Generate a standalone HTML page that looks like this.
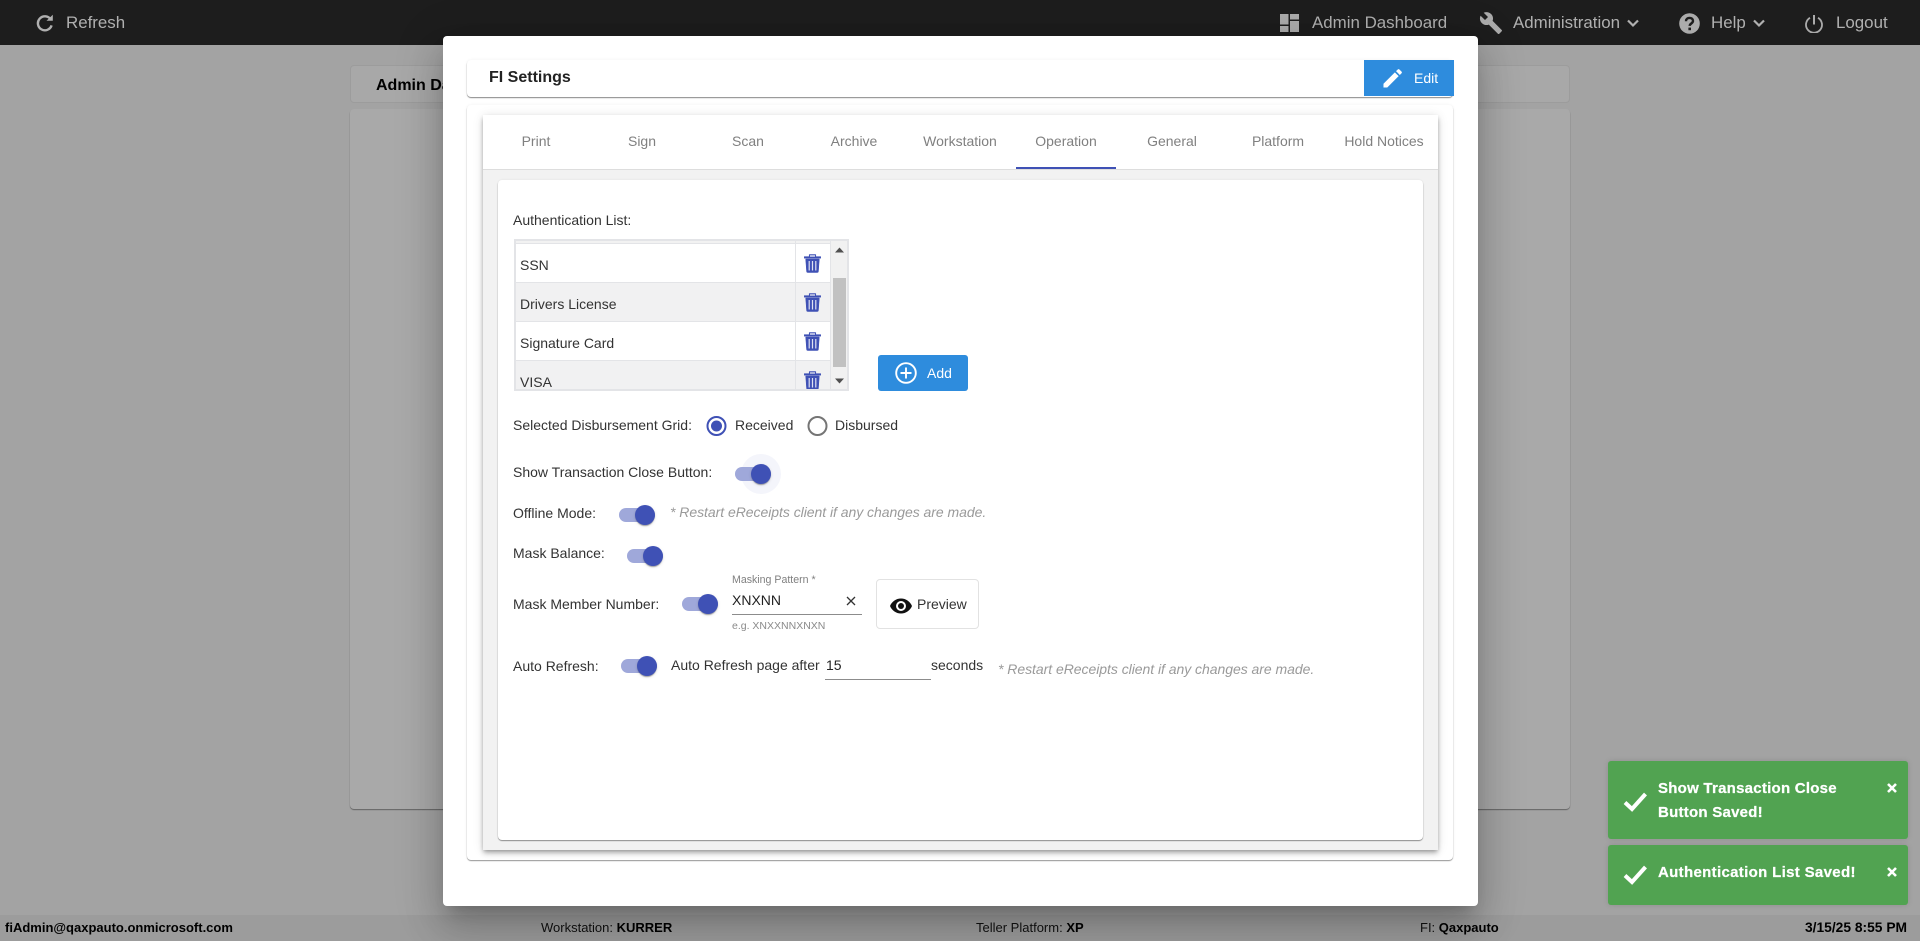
<!DOCTYPE html>
<html><head><meta charset="utf-8"><title>FI Settings</title>
<style>
html,body{margin:0;padding:0;width:1920px;height:941px;overflow:hidden;background:#a3a3a3;font-family:"Liberation Sans",Arial,sans-serif;}
div,span,svg{position:absolute;box-sizing:border-box}
.t{white-space:nowrap;line-height:20px;height:20px;font-size:14px;color:#333}
.nav{color:#b0b0b0;font-size:16.9px;top:13px}
.tab{color:#808080;top:131px;width:106px;text-align:center}
.sw{width:36px;height:14px;border-radius:7px;background:#9fa8da}
.sw i{position:absolute;display:block;width:20px;height:20px;border-radius:50%;background:#3f51b5;top:-3px;left:16px;box-shadow:0 2px 1px -1px rgba(0,0,0,.2),0 1px 1px rgba(0,0,0,.14),0 1px 3px rgba(0,0,0,.12)}
.note{color:#9a9a9a;font-style:italic;letter-spacing:-.04px}
.toast{left:1608px;width:300px;background:#51a351;border-radius:3px;box-shadow:0 0 6px rgba(0,0,0,.12)}
.tt{color:#fff;font-weight:bold;font-size:15px;letter-spacing:.25px;-webkit-text-stroke:.25px #fff}
.st{font-size:13px;color:#111;top:918px}
.st b{color:#000}
</style></head><body>
<!-- background -->
<div style="left:0;top:0;width:1920px;height:45px;background:#1d1d1d"></div>
<div style="left:350px;top:65px;width:1220px;height:38px;background:#a8a8a8;border:1px solid #9c9c9c;border-radius:4px"></div>
<div class="t" style="left:376px;top:76px;font-weight:bold;font-size:16px;color:#000">Admin Dashboard</div>
<div style="left:350px;top:109px;width:1220px;height:700px;background:#a9a9a9;border-radius:4px;box-shadow:0 1px 1px rgba(0,0,0,.4)"></div>
<div style="left:0;top:915px;width:1920px;height:26px;background:#9c9c9c"></div>

<!-- nav -->
<svg style="left:36px;top:14px" width="18" height="18" viewBox="0 0 18 18"><path d="M14.6 5.2A7 7 0 1 0 15.6 11.4" fill="none" stroke="#b0b0b0" stroke-width="2.4"/><path d="M10.5 6.8L16.8 6.8 16.8 .8z" fill="#b0b0b0"/></svg>
<div class="t nav" style="left:66px">Refresh</div>
<svg style="left:1280px;top:14px" width="19" height="18" viewBox="0 0 19 18" fill="#ababab"><rect x="0" y="0" width="8.5" height="10.5"/><rect x="10" y="0" width="9" height="5.5"/><rect x="10" y="7" width="9" height="11"/><rect x="0" y="12" width="8.5" height="6"/></svg>
<div class="t nav" style="left:1312px">Admin Dashboard</div>
<svg style="left:1479px;top:11px" width="24" height="24" viewBox="0 0 24 24"><path d="M22.7 19l-9.100-9.100c.9-2.300.4-5-1.500-6.900-2-2-5-2.400-7.400-1.300L9 6 6 9 1.600 4.700C.4 7.100.9 10.100 2.900 12.100c1.900 1.900 4.600 2.400 6.900 1.500l9.100 9.100c.4.4 1 .4 1.400 0l2.300-2.300c.5-.4.5-1.100.1-1.400z" fill="#ababab"/></svg>
<div class="t nav" style="left:1513px">Administration</div>
<svg style="left:1627px;top:19px" width="12" height="9" viewBox="0 0 12 9"><path d="M1 1.500l5 5 5-5" fill="none" stroke="#b0b0b0" stroke-width="2.200"/></svg>
<svg style="left:1679px;top:13px" width="21" height="21" viewBox="0 0 21 21"><circle cx="10.500" cy="10.500" r="10.300" fill="#ababab"/><path d="M7 8.200c0-2 1.500-3.300 3.500-3.300s3.500 1.200 3.500 3c0 2.600-3.300 2.600-3.300 5" fill="none" stroke="#1d1d1d" stroke-width="2.400"/><rect x="9.400" y="14.600" width="2.600" height="2.600" fill="#1d1d1d"/></svg>
<div class="t nav" style="left:1711px">Help</div>
<svg style="left:1753px;top:19px" width="12" height="9" viewBox="0 0 12 9"><path d="M1 1.500l5 5 5-5" fill="none" stroke="#b0b0b0" stroke-width="2.200"/></svg>
<svg style="left:1805px;top:14px" width="18" height="19" viewBox="0 0 18 19"><path d="M5 3.800A8 8 0 1 0 13 3.800" fill="none" stroke="#ababab" stroke-width="1.800"/><rect x="8" y="1" width="2" height="9.500" fill="#ababab"/></svg>
<div class="t nav" style="left:1836px">Logout</div>

<!-- status -->
<div class="t st" style="left:5px;font-weight:bold;color:#000">fiAdmin@qaxpauto.onmicrosoft.com</div>
<div class="t st" style="left:541px">Workstation: <b>KURRER</b></div>
<div class="t st" style="left:976px">Teller Platform: <b>XP</b></div>
<div class="t st" style="left:1420px">FI: <b>Qaxpauto</b></div>
<div class="t st" style="left:1805px;font-weight:bold;color:#000;font-size:13.800px">3/15/25 8:55 PM</div>

<!-- modal -->
<div style="left:443px;top:36px;width:1035px;height:870px;background:#fff;border-radius:4px;box-shadow:0 11px 15px -7px rgba(0,0,0,.2),0 24px 38px 3px rgba(0,0,0,.14),0 9px 46px 8px rgba(0,0,0,.12)"></div>
<div style="left:467px;top:60px;width:986px;height:37px;background:#fff;border-radius:4px;box-shadow:0 1px 1px rgba(0,0,0,.45),0 0 3px rgba(0,0,0,.06)"></div>
<div class="t" style="left:489px;top:68px;font-weight:bold;font-size:16px;color:#222">FI Settings</div>
<div style="left:1364px;top:60px;width:90px;height:36px;background:#2e8cdd"></div>
<svg style="left:1383px;top:69px" width="19" height="19" viewBox="0 0 20 20"><path d="M0.500 19.500V15.500L12.500 3.500 16.500 7.500 4.500 19.500zM13.700 2.300L15.400 .6a1.400 1.400 0 0 1 2 0l2 2a1.400 1.400 0 0 1 0 2L17.700 6.300z" fill="#fff"/></svg>
<div class="t" style="left:1414px;top:68px;color:#fff">Edit</div>

<div style="left:467px;top:105px;width:986px;height:755px;background:#fff;border-radius:4px;box-shadow:0 1px 1px rgba(0,0,0,.4),0 0 3px rgba(0,0,0,.06)"></div>
<div style="left:483px;top:115px;width:955px;height:735px;background:#f2f2f2;box-shadow:0 2px 4px -1px rgba(0,0,0,.3),0 4px 5px rgba(0,0,0,.14),0 1px 10px rgba(0,0,0,.12)"></div>
<div style="left:483px;top:115px;width:955px;height:55px;background:#fff;border-bottom:1px solid #ddd"></div>
<div class="t tab" style="left:483px">Print</div>
<div class="t tab" style="left:589px">Sign</div>
<div class="t tab" style="left:695px">Scan</div>
<div class="t tab" style="left:801px">Archive</div>
<div class="t tab" style="left:907px">Workstation</div>
<div class="t tab" style="left:1013px">Operation</div>
<div class="t tab" style="left:1119px">General</div>
<div class="t tab" style="left:1225px">Platform</div>
<div class="t tab" style="left:1331px">Hold Notices</div>
<div style="left:1016px;top:167px;width:100px;height:2px;background:#3f51b5"></div>
<div style="left:498px;top:180px;width:925px;height:660px;background:#fff;border-radius:4px;box-shadow:0 1px 1px rgba(0,0,0,.4),0 0 2px rgba(0,0,0,.08)"></div>

<!-- auth list -->
<div class="t" style="left:513px;top:210px">Authentication List:</div>
<div style="left:514px;top:239px;width:335px;height:152px;border:2px solid #e3e4e7;overflow:hidden;background:#fff">
<div style="left:0;top:0;width:314px;height:2px;background:#f2f2f2"></div>
<div style="left:0;top:2px;width:314px;height:1px;background:#e3e4e7"></div>
<div style="left:0;top:3px;width:314px;height:39px;background:#fff;border-bottom:1px solid #e3e4e7"></div>
<div style="left:0;top:42px;width:314px;height:39px;background:#f1f1f2;border-bottom:1px solid #e3e4e7"></div>
<div style="left:0;top:81px;width:314px;height:39px;background:#fff;border-bottom:1px solid #e3e4e7"></div>
<div style="left:0;top:120px;width:314px;height:39px;background:#f1f1f2"></div>
<div style="left:279px;top:0;width:1px;height:152px;background:#e3e4e7"></div>
<div style="left:314px;top:0;width:19px;height:150px;background:#f1f1f1;border-left:1px solid #e3e4e7"></div>
<div style="left:317px;top:37px;width:13px;height:89px;background:#c1c1c1"></div>
<svg style="left:318px;top:6px" width="11" height="6" viewBox="0 0 11 6"><path d="M5.500 .5L10 5.500H1z" fill="#505050"/></svg>
<svg style="left:318px;top:137px" width="11" height="6" viewBox="0 0 11 6"><path d="M5.500 5.500L10 .5H1z" fill="#505050"/></svg>
<div class="t" style="left:4px;top:14px">SSN</div>
<div class="t" style="left:4px;top:53px">Drivers License</div>
<div class="t" style="left:4px;top:92px">Signature Card</div>
<div class="t" style="left:4px;top:131px">VISA</div>
<svg style="left:288px;top:13px" width="17" height="19" viewBox="0 0 17 19"><path d="M1.700 5H15.300L14.400 17.500a1 1 0 0 1-1 1H3.600a1 1 0 0 1-1-1zM.2 2.600H16.800V4.200H.2zM5.200 2.600V.5H11.800V2.600" fill="#3f51b5" stroke="#3f51b5" stroke-width=".5"/><path d="M6 1.400h5v1.200H6z" fill="#fff"/><path d="M5.200 7v9.500M8.500 7v9.500M11.800 7v9.500" stroke="#dfe2f3" stroke-width="1.200"/></svg>
<svg style="left:288px;top:52px" width="17" height="19" viewBox="0 0 17 19"><path d="M1.700 5H15.300L14.400 17.500a1 1 0 0 1-1 1H3.600a1 1 0 0 1-1-1zM.2 2.600H16.800V4.200H.2zM5.200 2.600V.5H11.800V2.600" fill="#3f51b5" stroke="#3f51b5" stroke-width=".5"/><path d="M6 1.400h5v1.200H6z" fill="#f1f1f2"/><path d="M5.200 7v9.500M8.500 7v9.500M11.800 7v9.500" stroke="#dfe2f3" stroke-width="1.200"/></svg>
<svg style="left:288px;top:91px" width="17" height="19" viewBox="0 0 17 19"><path d="M1.700 5H15.300L14.400 17.500a1 1 0 0 1-1 1H3.600a1 1 0 0 1-1-1zM.2 2.600H16.800V4.200H.2zM5.200 2.600V.5H11.800V2.600" fill="#3f51b5" stroke="#3f51b5" stroke-width=".5"/><path d="M6 1.400h5v1.200H6z" fill="#fff"/><path d="M5.200 7v9.500M8.500 7v9.500M11.800 7v9.500" stroke="#dfe2f3" stroke-width="1.200"/></svg>
<svg style="left:288px;top:130px" width="17" height="19" viewBox="0 0 17 19"><path d="M1.700 5H15.300L14.400 17.500a1 1 0 0 1-1 1H3.600a1 1 0 0 1-1-1zM.2 2.600H16.800V4.200H.2zM5.200 2.600V.5H11.800V2.600" fill="#3f51b5" stroke="#3f51b5" stroke-width=".5"/><path d="M6 1.400h5v1.200H6z" fill="#f1f1f2"/><path d="M5.200 7v9.500M8.500 7v9.500M11.800 7v9.500" stroke="#dfe2f3" stroke-width="1.200"/></svg>
</div>
<div style="left:878px;top:355px;width:90px;height:36px;background:#2e8cdd;border-radius:3px"></div>
<svg style="left:895px;top:362px" width="22" height="22" viewBox="0 0 22 22"><circle cx="11" cy="11" r="9.800" fill="none" stroke="#fff" stroke-width="1.900"/><path d="M11 5.500v11M5.500 11h11" stroke="#fff" stroke-width="1.900"/></svg>
<div class="t" style="left:927px;top:363px;color:#fff">Add</div>

<!-- radios -->
<div class="t" style="left:513px;top:415px">Selected Disbursement Grid:</div>
<svg style="left:706px;top:416px" width="21" height="20" viewBox="0 0 21 20"><circle cx="10.500" cy="10" r="9" fill="none" stroke="#3f51b5" stroke-width="2"/><circle cx="10.500" cy="10" r="5.500" fill="#3f51b5"/></svg>
<div class="t" style="left:735px;top:415px">Received</div>
<svg style="left:807px;top:416px" width="21" height="20" viewBox="0 0 21 20"><circle cx="10.500" cy="10" r="9" fill="none" stroke="#757575" stroke-width="2"/></svg>
<div class="t" style="left:835px;top:415px">Disbursed</div>

<!-- toggles -->
<div class="t" style="left:513px;top:462px">Show Transaction Close Button:</div>
<div style="left:741px;top:454px;width:40px;height:40px;border-radius:50%;background:#f4f5fb"></div>
<div class="sw" style="left:735px;top:467px"><i></i></div>
<div class="t" style="left:513px;top:503px">Offline Mode:</div>
<div class="sw" style="left:619px;top:508px"><i></i></div>
<div class="t note" style="left:670px;top:502px">* Restart eReceipts client if any changes are made.</div>
<div class="t" style="left:513px;top:543px">Mask Balance:</div>
<div class="sw" style="left:627px;top:549px"><i></i></div>
<div class="t" style="left:513px;top:594px">Mask Member Number:</div>
<div class="sw" style="left:682px;top:597px"><i></i></div>
<div class="t" style="left:732px;top:570px;font-size:10.600px;color:#808080">Masking Pattern *</div>
<div class="t" style="left:732px;top:590px;color:#222">XNXNN</div>
<svg style="left:846px;top:596px" width="10" height="10" viewBox="0 0 10 10"><path d="M1 1l8 8M9 1l-8 8" stroke="#333" stroke-width="1.300"/></svg>
<div style="left:732px;top:614px;width:130px;height:1px;background:#8c8c8c"></div>
<div class="t" style="left:732px;top:616px;font-size:10.500px;color:#8a8a8a">e.g. XNXXNNXNXN</div>
<div style="left:876px;top:579px;width:103px;height:50px;border:1px solid #e2e2e2;border-radius:4px;background:#fff"></div>
<svg style="left:889px;top:597px" width="24" height="18" viewBox="0 0 24 18"><path fill-rule="evenodd" d="M12 1.500C7 1.500 2.800 4.600 1 9c1.800 4.400 6 7.500 11 7.500S21.200 13.400 23 9C21.200 4.600 17 1.500 12 1.500zM12 14a5 5 0 1 1 0-10 5 5 0 0 1 0 10z" fill="#111"/><circle cx="12" cy="9" r="3" fill="#111"/></svg>
<div class="t" style="left:917px;top:594px">Preview</div>
<div class="t" style="left:513px;top:656px">Auto Refresh:</div>
<div class="sw" style="left:621px;top:659px"><i></i></div>
<div class="t" style="left:671px;top:655px">Auto Refresh page after</div>
<div class="t" style="left:826px;top:655px;color:#222">15</div>
<div style="left:825px;top:679px;width:106px;height:1px;background:#8c8c8c"></div>
<div class="t" style="left:931px;top:655px">seconds</div>
<div class="t note" style="left:998px;top:659px">* Restart eReceipts client if any changes are made.</div>

<!-- toasts -->
<div class="toast" style="top:761px;height:78px"></div>
<div class="t tt" style="left:1658px;top:779px">Show Transaction Close</div>
<div class="t tt" style="left:1658px;top:803px">Button Saved!</div>
<svg style="left:1623px;top:790px" width="24" height="24" viewBox="0 0 24 24"><path d="M2 12.500l7 6.500L22.500 4" fill="none" stroke="#fff" stroke-width="4"/></svg>
<svg style="left:1887px;top:783px" width="10" height="10" viewBox="0 0 10 10"><path d="M1 1l8 8M9 1l-8 8" stroke="#fff" stroke-width="2.600"/></svg>
<div class="toast" style="top:845px;height:60px"></div>
<div class="t tt" style="left:1658px;top:863px;letter-spacing:.33px">Authentication List Saved!</div>
<svg style="left:1623px;top:863px" width="24" height="24" viewBox="0 0 24 24"><path d="M2 12.500l7 6.500L22.500 4" fill="none" stroke="#fff" stroke-width="4"/></svg>
<svg style="left:1887px;top:867px" width="10" height="10" viewBox="0 0 10 10"><path d="M1 1l8 8M9 1l-8 8" stroke="#fff" stroke-width="2.600"/></svg>
</body></html>
